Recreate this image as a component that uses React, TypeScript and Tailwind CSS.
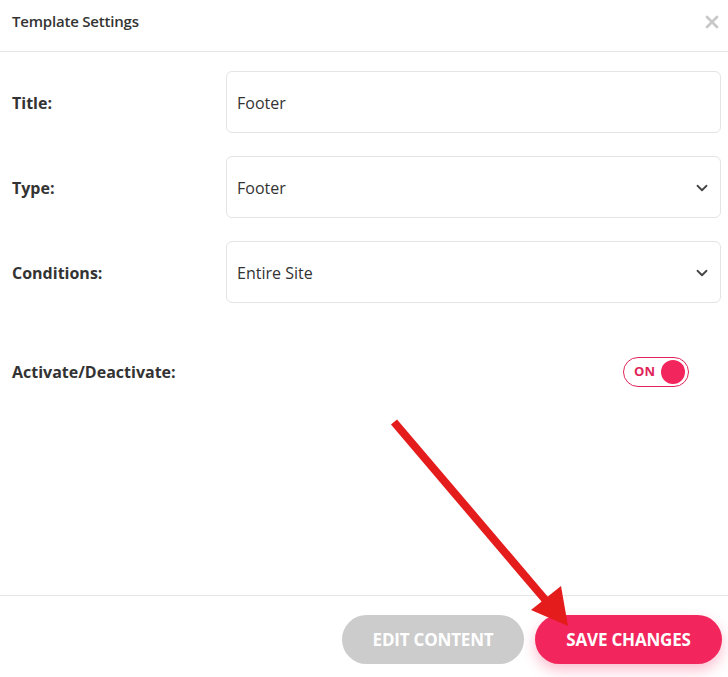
import { ChevronDown, X } from "lucide-react";

const font = { fontFamily: '"Open Sans", "Noto Sans", sans-serif' };

function Field({ label, value, select }: { label: string; value: string; select?: boolean }) {
    return (
        <div className="flex items-center">
            <div className="w-[214px] shrink-0 pt-[2px] text-[16px] font-bold text-[#333]">{label}</div>
            <div className="flex h-[62px] flex-1 items-center justify-between rounded-md border border-[#e4e4e4] pl-[10px] pr-[9px]">
                <span className="pt-[2px] text-[16px] text-[#333]">{value}</span>
                {select && <ChevronDown className="mt-[2px] h-[18px] w-[18px] text-[#444]" strokeWidth={2.4} />}
            </div>
        </div>
    );
}

export default function App() {
    return (
        <div className="relative flex h-[677px] w-[728px] flex-col bg-white" style={font}>
            {/* Header */}
            <div className="flex h-[52px] items-start justify-between border-b border-[#e6e6e6] pl-[12px] pr-[6px] pt-[10px]">
                <h3 className="text-[15px] font-semibold tracking-[-0.2px] text-[#333]">Template Settings</h3>
                <X className="mt-[2px] h-[20px] w-[20px] text-[#c8c8c8]" strokeWidth={3.2} />
            </div>

            {/* Body */}
            <div className="flex flex-1 flex-col pl-[12px] pr-[7px] pt-[19px]">
                <div className="flex flex-col gap-[23px]">
                    <Field label="Title:" value="Footer" />
                    <Field label="Type:" value="Footer" select />
                    <Field label="Conditions:" value="Entire Site" select />
                </div>
                <div className="mt-[54px] flex items-center justify-between pr-[32px]">
                    <span className="text-[16px] font-bold text-[#333]">Activate/Deactivate:</span>
                    <div className="flex h-[30px] w-[66px] items-center justify-end gap-[6px] rounded-full border-[1.5px] border-[#e0245a] pr-[3px]">
                        <span className="text-[13px] font-bold text-[#e0245a]">ON</span>
                        <span className="h-[24px] w-[24px] rounded-full bg-[#f2265d]" />
                    </div>
                </div>
            </div>

            {/* Footer */}
            <div className="flex h-[82px] items-start justify-end gap-[11px] border-t border-[#e6e6e6] pr-[6px] pt-[19px]">
                <button className="h-[49px] w-[182px] rounded-full bg-[#cccccc] text-[17px] font-bold uppercase tracking-[-0.2px] text-white">
                    Edit Content
                </button>
                <button className="h-[49px] w-[187px] rounded-full bg-[#f2265d] text-[17px] font-bold uppercase tracking-[-0.2px] text-white shadow-[0_6px_14px_rgba(242,38,93,0.3)]">
                    Save Changes
                </button>
            </div>

            {/* Annotation arrow */}
            <svg className="pointer-events-none absolute left-0 top-0" width="728" height="677">
                <line x1="394" y1="422" x2="548" y2="603" stroke="#e41c1c" strokeWidth="8" />
                <polygon points="568,626 531,610 561,586" fill="#e41c1c" />
            </svg>
        </div>
    );
}
